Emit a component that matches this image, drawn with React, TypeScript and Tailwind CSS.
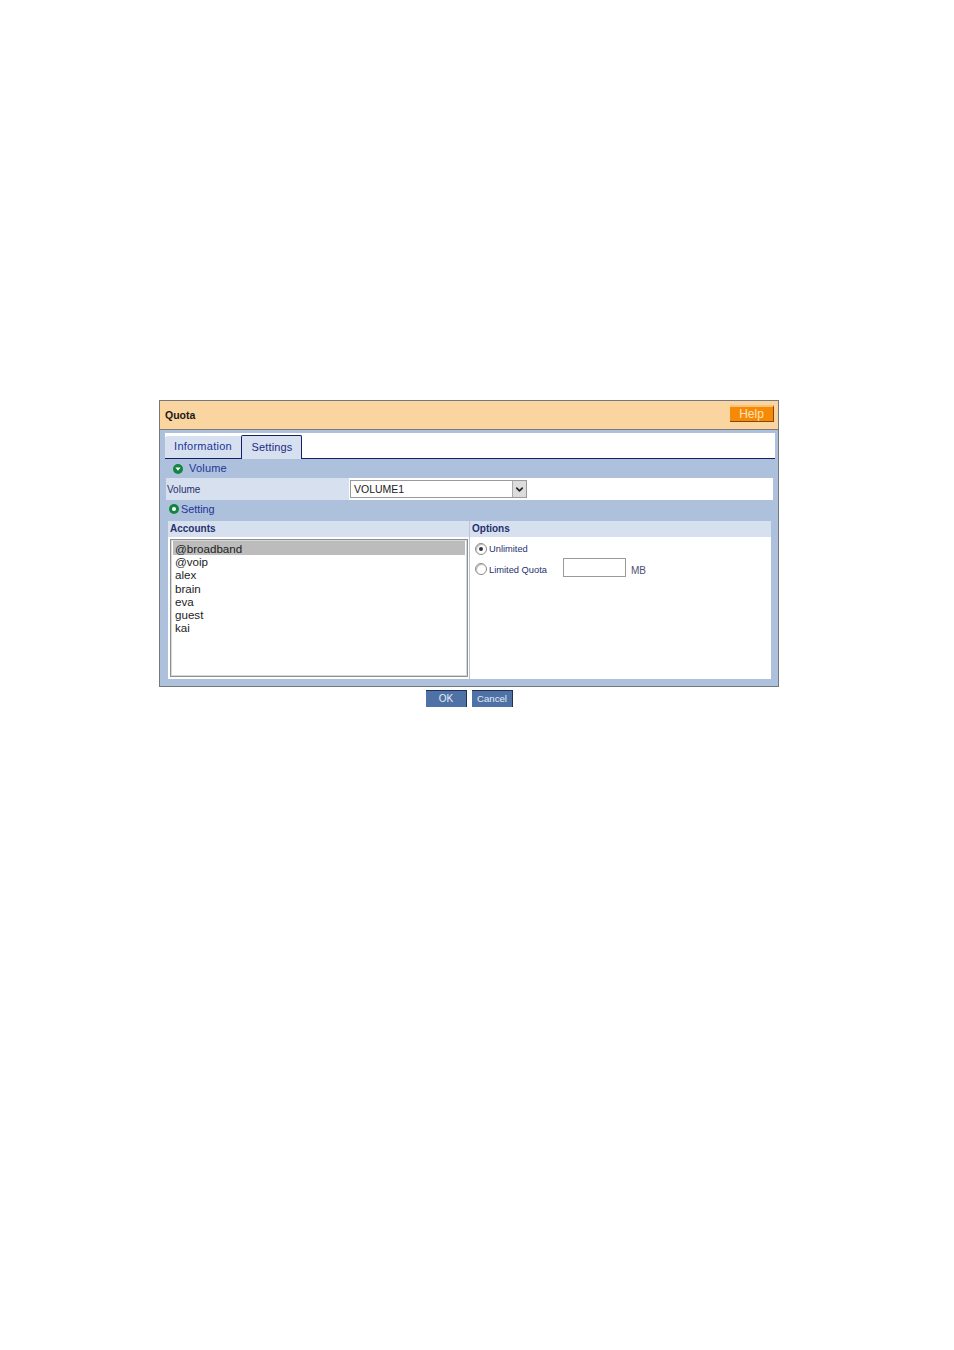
import { ChevronDown } from "lucide-react";

const accounts = ["@broadband", "@voip", "alex", "brain", "eva", "guest", "kai"];

function SectionIcon({ open }: { open?: boolean }) {
    return (
        <span className="size-[10px] rounded-full bg-[#12853f] flex items-center justify-center shrink-0">
            {open ? (
                <svg viewBox="0 0 10 10" className="size-[10px]">
                    <path d="M2.4 3.6 L7.6 3.6 L5 6.8 Z" fill="#fff" />
                </svg>
            ) : (
                <span className="size-1 rounded-full bg-white" />
            )}
        </span>
    );
}

function Radio({ checked, className }: { checked?: boolean; className?: string }) {
    return (
        <span className={`size-3 rounded-full border border-[#8a8a8a] bg-white flex items-center justify-center shrink-0 shadow-[inset_1px_1px_1px_#bbb] ${className ?? ""}`}>
            {checked && <span className="size-1 rounded-full bg-[#333]" />}
        </span>
    );
}

export default function App() {
    return (
        <div className="min-h-[1350px] bg-white pt-[400px] pl-[159px] font-['Liberation_Sans',sans-serif]">
            <div className="w-[620px] h-[287px] border border-[#74777d] bg-[#adc0dc] flex flex-col">
                <div className="h-[29px] bg-[#fad59f] border-b border-[#7b7b78] flex items-center justify-between pl-[5px] pr-[4px] shrink-0">
                    <span className="mt-px text-[10.5px] font-bold text-[#1a1a1a]">Quota</span>
                    <button className="w-[44px] h-[17px] bg-[#f78a05] border-t-2 border-t-[#fbc27a] border-r border-r-[#7a4a10] border-b border-b-[#7a4a10] text-[#fde3c0] text-[12px] leading-none mb-[4px]">
                        Help
                    </button>
                </div>

                <div className="mt-[3px] ml-[5px] mr-[3px] h-[26px] bg-white border-b border-[#15206b] flex items-end shrink-0">
                    <div className="w-[76px] h-[22px] pb-[2px] bg-[#d6e0ef] rounded-tl-[3px] flex items-center justify-center text-[11px] tracking-[0.25px] text-[#23349a]">
                        Information
                    </div>
                    <div className="w-[61px] h-[24px] -mb-px pl-px bg-[#d6e0ef] border border-b-0 border-[#15206b] rounded-t-[2px] flex items-center justify-center text-[11px] tracking-[0.15px] text-[#1b2a86]">
                        Settings
                    </div>
                </div>

                <div className="h-[19px] pl-[13px] flex items-center gap-[6px] shrink-0">
                    <SectionIcon open />
                    <span className="text-[11px] tracking-[0.2px] text-[#23349a]">Volume</span>
                </div>

                <div className="ml-[6px] mr-[5px] h-[22px] bg-white flex shrink-0">
                    <div className="w-[183px] bg-[#d6e0ef] pl-px flex items-center text-[10px] text-[#26306e]">Volume</div>
                    <div className="pl-px flex items-center">
                        <div className="w-[177px] h-[18px] border border-[#9a9a9a] bg-white flex items-center justify-between">
                            <span className="pl-[3px] pt-px text-[10.5px] text-[#222]">VOLUME1</span>
                            <span className="w-[14px] h-[16px] bg-[#dcdcdc] border-l border-[#aaa] flex items-center justify-center">
                                <ChevronDown size={11} strokeWidth={3.5} className="text-[#222]" />
                            </span>
                        </div>
                    </div>
                </div>

                <div className="h-[21px] pb-[3px] pl-[9px] flex items-center gap-[2px] shrink-0">
                    <SectionIcon />
                    <span className="text-[10.8px] text-[#23349a]">Setting</span>
                </div>

                <div className="ml-[8px] mr-[7px] grid grid-cols-[301px_1fr] gap-x-px bg-[#b9c6d8] shrink-0">
                    <div className="h-[16px] pb-[2px] bg-[#d6e0ef] pl-[2px] flex items-center text-[10px] font-bold text-[#26306e]">Accounts</div>
                    <div className="h-[16px] pb-[2px] bg-[#d6e0ef] pl-[2px] flex items-center text-[10px] font-bold text-[#26306e]">Options</div>
                    <div className="h-[142px] bg-white pl-[2px] pt-[2px]">
                        <div className="w-[298px] h-[138px] border border-[#8f8f8f] p-px pl-[2px] pr-[2px] outline outline-1 -outline-offset-2 outline-[#d8d8d8]">
                            {accounts.map((name, index) => (
                                <div
                                    key={name}
                                    className={`pl-[2px] text-[11.6px] text-[#1c1c1c] ${index === 0 ? "h-[14px] leading-[15px] bg-[#bcbcbc]" : "h-[13.3px] leading-[13.3px]"}`}
                                >
                                    {name}
                                </div>
                            ))}
                        </div>
                    </div>
                    <div className="h-[142px] bg-white pl-[5px] pt-[6px] text-[9.3px] text-[#26306e]">
                        <div className="flex items-center gap-[2px] h-[12px]">
                            <Radio checked />
                            <span className="mt-px">Unlimited</span>
                        </div>
                        <div className="flex items-start mt-[3px] h-[20px]">
                            <Radio className="mt-[5px]" />
                            <span className="ml-[2px] w-[74px] mt-[6px] leading-[12px]">Limited Quota</span>
                            <span className="w-[63px] h-[19px] border border-[#9a9a9a] bg-white" />
                            <span className="ml-[5px] mt-[7px] text-[10px] leading-[12px] text-[#4a5070]">MB</span>
                        </div>
                    </div>
                </div>
            </div>

            <div className="w-[620px] mt-[3px] flex pl-[267px] gap-[5px]">
                <button className="w-[41px] h-[17px] bg-[#4f72a6] border-t border-r border-[#1f2f55] text-[#e6ecf5] text-[10px] leading-none">
                    OK
                </button>
                <button className="w-[41px] h-[17px] bg-[#4f72a6] border-t border-r border-[#1f2f55] text-[#e6ecf5] text-[9.6px] leading-none">
                    Cancel
                </button>
            </div>
        </div>
    );
}
